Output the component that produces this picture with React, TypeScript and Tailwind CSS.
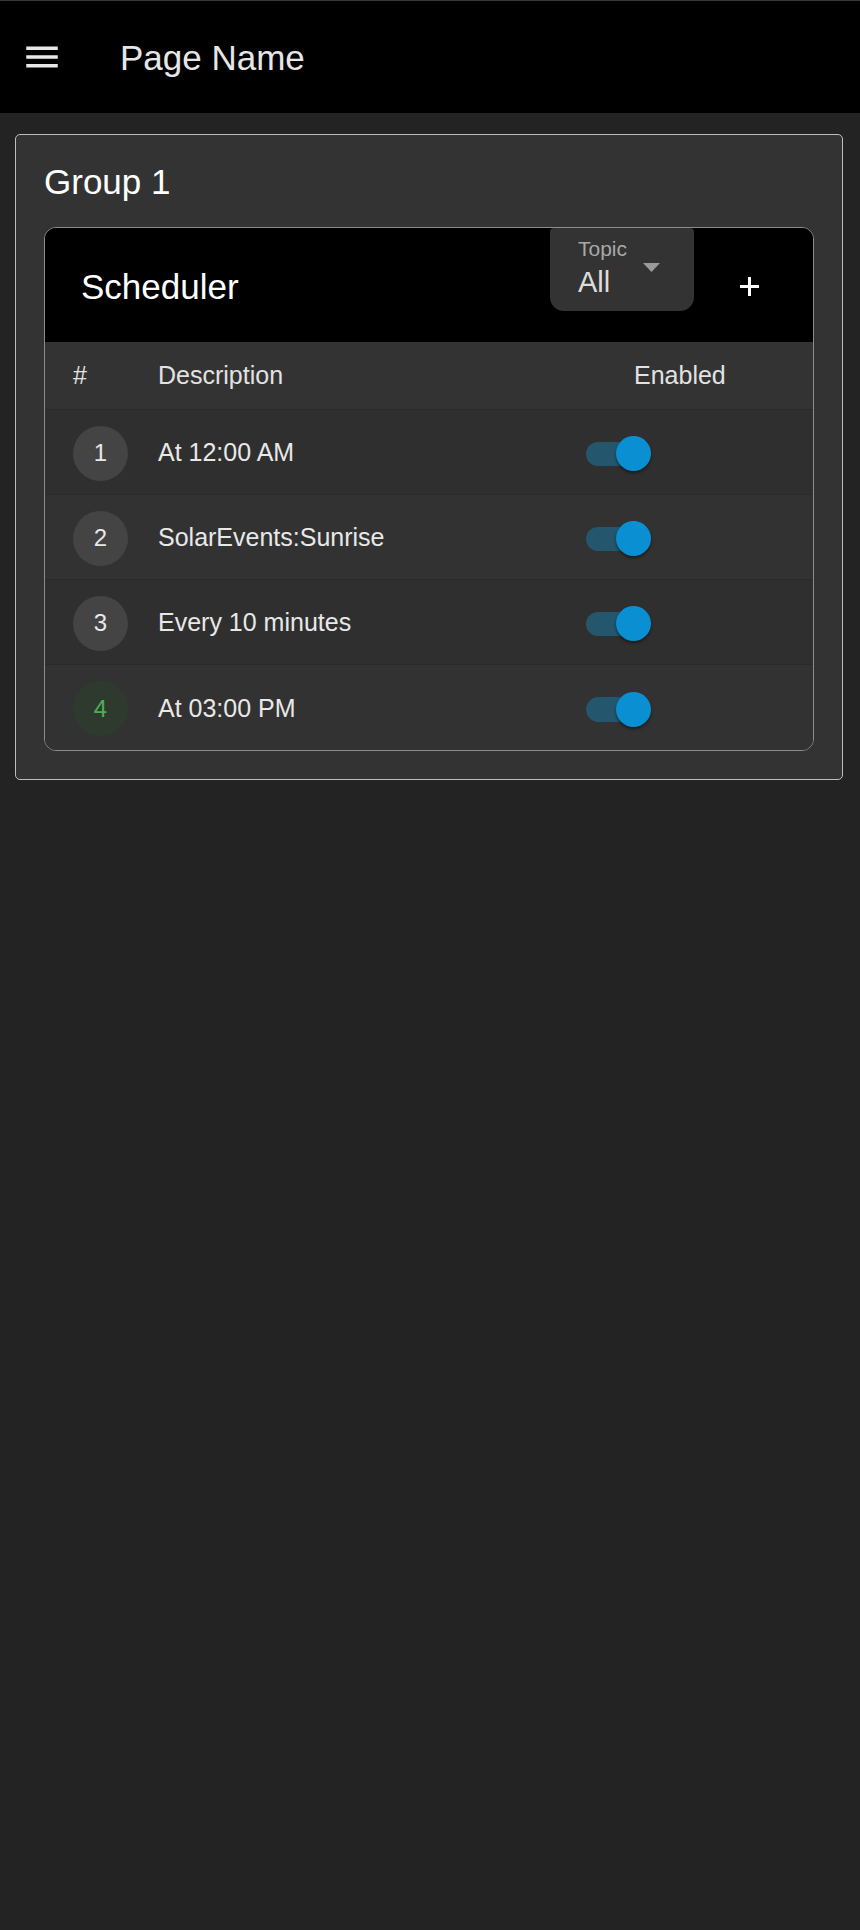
import React, { useState } from 'react'

type Row = { id: number; text: string; active?: boolean }

const rows: Row[] = [
  { id: 1, text: 'At 12:00 AM' },
  { id: 2, text: 'SolarEvents:Sunrise' },
  { id: 3, text: 'Every 10 minutes' },
  { id: 4, text: 'At 03:00 PM', active: true },
]

const Toggle = ({ on, onClick }: { on: boolean; onClick: () => void }) => (
  <button className="relative ml-[21px] mt-[3px] h-[35px] w-[66px]" onClick={onClick}>
    <span className={`absolute left-0 top-[5.5px] h-[24.5px] w-[59.5px] rounded-full ${on ? 'bg-[#24566e]' : 'bg-[#555]'}`} />
    <span
      className={`absolute top-0 h-[35px] w-[35px] rounded-full shadow-[0_2px_3px_rgba(0,0,0,0.45)] ${on ? 'left-[30px] bg-[#0a8fd3]' : 'left-[-5px] bg-[#ccc]'}`}
    />
  </button>
)

export default function App() {
  const [enabled, setEnabled] = useState<Record<number, boolean>>({ 1: true, 2: true, 3: true, 4: true })

  return (
    <div className="min-h-screen bg-[#232323] font-['Liberation_Sans',Arial,sans-serif]">
      {/* App bar */}
      <header className="flex h-[113px] items-center border-t border-[#3a3a3a] bg-black">
        <button className="ml-[21px] h-[42px] w-[42px] text-[#e8e8e8]">
          <svg viewBox="0 0 24 24" className="h-[42px] w-[42px]" fill="currentColor">
            <path d="M3 18h18v-2H3v2zm0-5h18v-2H3v2zm0-7v2h18V6H3z" />
          </svg>
        </button>
        <h1 className="ml-[57px] pt-[2px] text-[35px] leading-[40px] text-[#e6e6e6]">Page Name</h1>
      </header>

      {/* Group card */}
      <div className="mx-[15px] mt-[21px] w-[828px] rounded-[5px] border border-[#bdbdbd] bg-[#333333] px-[28px] pb-[28px] pt-[27px]">
        <div className="mb-[25px] text-[35px] leading-[40px] text-white">Group 1</div>

        <div className="overflow-hidden rounded-[12px] border border-[#8c8c8c] bg-[#303030]">
          {/* Toolbar */}
          <div className="flex h-[114px] items-center bg-black">
            <div className="flex-1 pl-[36px] pt-[3px] text-[35px] leading-[40px] text-white">Scheduler</div>
            <div className="relative h-[83px] w-[144px] self-start rounded-b-[14px] rounded-t-[4px] bg-[#333333] pl-[28px]">
              <div className="pt-[9px] text-[21px] leading-[24px] text-[#a8a8a8]">Topic</div>
              <div className="mt-[5px] text-[29px] leading-[32px] text-[#dddddd]">All</div>
              <svg viewBox="0 0 17 9" className="absolute left-[93px] top-[35px] h-[9px] w-[17px]" fill="#9a9a9a">
                <path d="M0 0h17L8.5 9z" />
              </svg>
            </div>
            <button className="ml-[46px] mr-[54px] mt-[2px] h-[19px] w-[19px] text-white">
              <svg viewBox="0 0 19 19" className="h-[19px] w-[19px]" fill="currentColor">
                <path d="M8 0h3v8h8v3h-8v8H8v-8H0V8h8z" />
              </svg>
            </button>
          </div>

          {/* Table head */}
          <div className="grid h-[68px] grid-cols-[85px_1fr_248px] items-center border-b border-[#2a2a2a] bg-[#333333] pl-[28px] text-[25px] text-[#e2e2e2]">
            <div>#</div>
            <div>Description</div>
            <div className="pl-[69px]">Enabled</div>
          </div>

          {/* Rows */}
          {rows.map((r, i) => (
            <div
              key={r.id}
              className={`grid h-[85px] grid-cols-[85px_1fr_248px] items-center pl-[28px] ${i < rows.length - 1 ? 'border-b border-[#2b2b2b]' : ''} ${i % 2 === 0 ? 'bg-[#2f2f2f]' : 'bg-[#323232]'}`}
            >
              <div
                className={`mt-[2px] flex h-[55px] w-[55px] items-center justify-center rounded-full text-[24px] ${r.active ? 'bg-[#2f3a2f] text-[#4caf50]' : 'bg-[#444444] text-[#e8e8e8]'}`}
              >
                {r.id}
              </div>
              <div className="mt-[2px] text-[25px] text-[#e8e8e8]">{r.text}</div>
              <div className="flex items-center">
                <Toggle on={enabled[r.id]} onClick={() => setEnabled({ ...enabled, [r.id]: !enabled[r.id] })} />
              </div>
            </div>
          ))}
        </div>
      </div>
    </div>
  )
}
